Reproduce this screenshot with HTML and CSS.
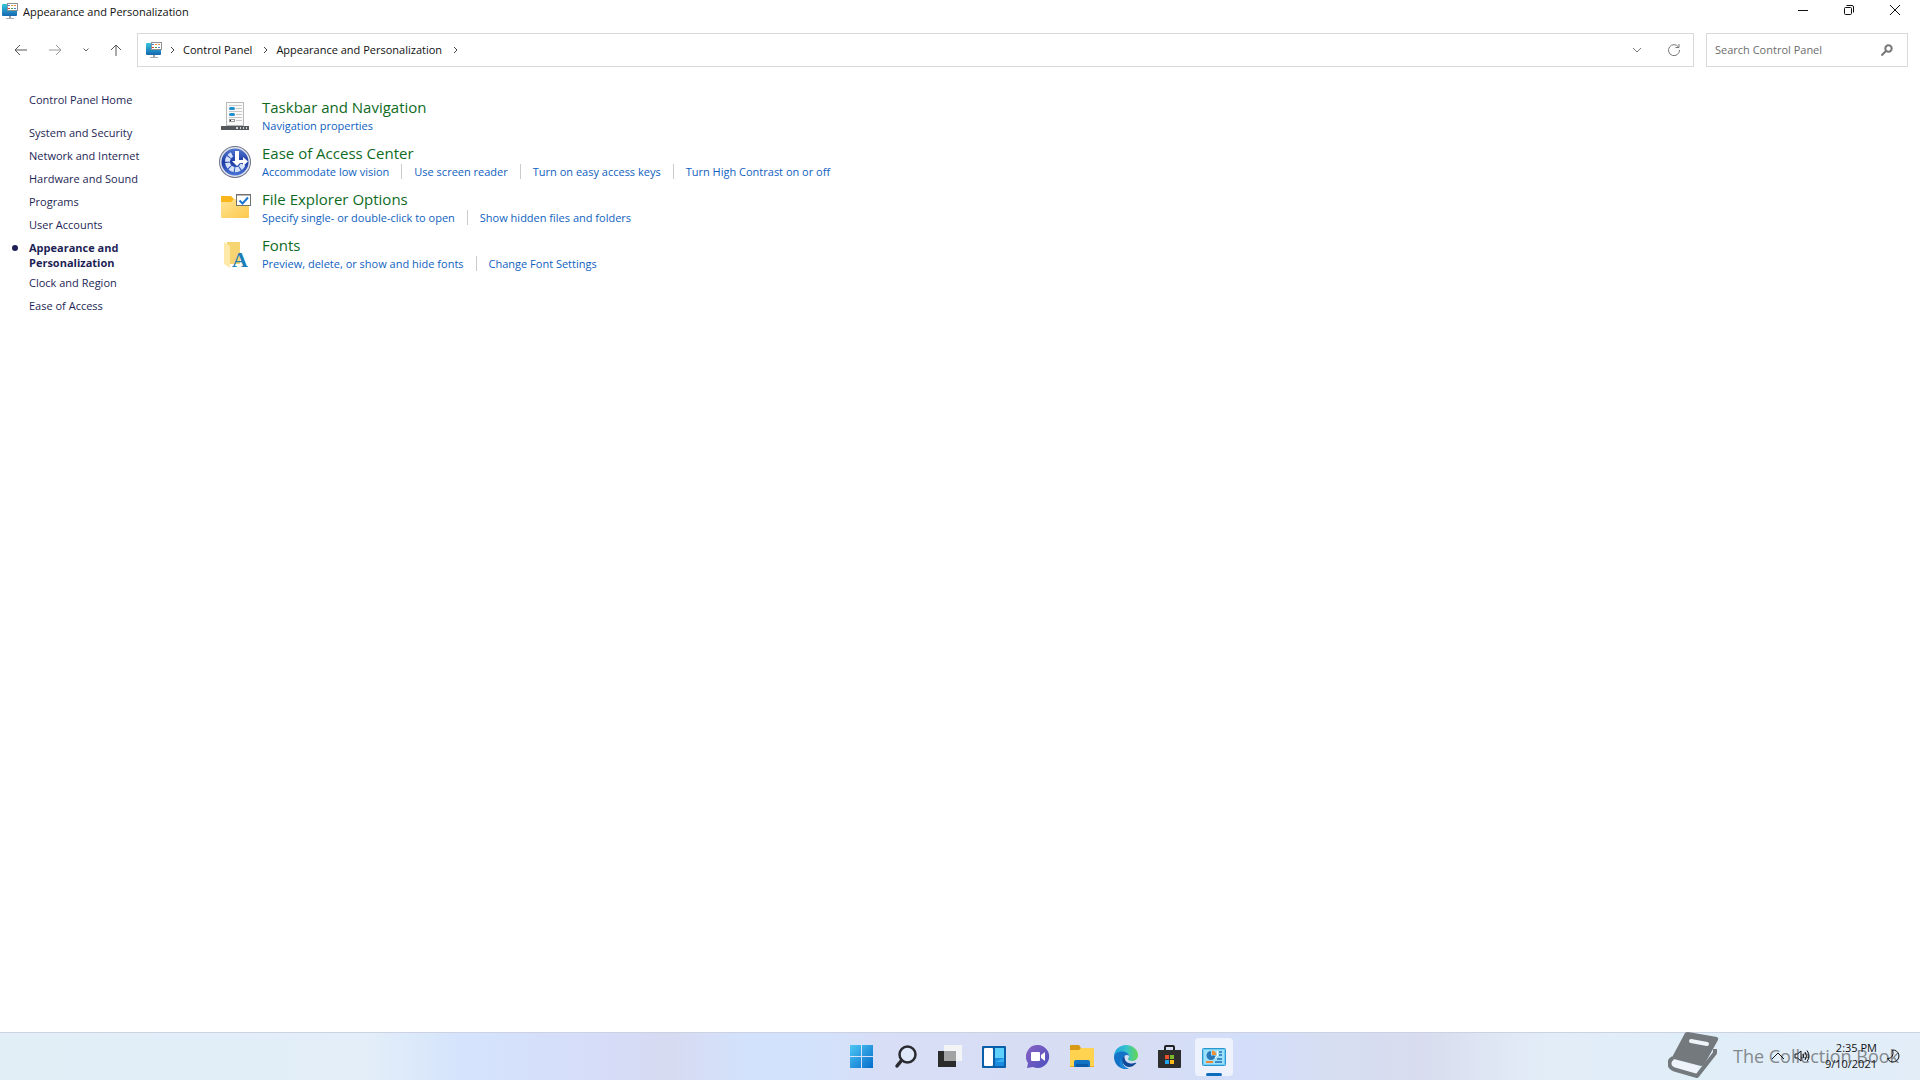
FILE: index.html
```html
<!DOCTYPE html>
<html lang="en">
<head>
    <meta charset="UTF-8">
    <meta name="viewport" content="width=device-width, initial-scale=1.0">
    <title>Appearance and Personalization</title>
    <link rel="stylesheet" href="styles.css">
</head>
<body>
    <!-- Shared Control Panel icon: title bar and address bar -->
    <svg class="defs" width="0" height="0" aria-hidden="true">
        <defs>
            <linearGradient id="screen" x1="0" y1="0" x2="0" y2="1">
                <stop offset="0" stop-color="#36c6dd"/>
                <stop offset="1" stop-color="#1667b0"/>
            </linearGradient>
            <symbol id="cp-icon" viewBox="0 0 16 16">
                <rect x="0" y="1" width="15" height="12" rx="1" fill="url(#screen)"/>
                <path d="M7 13h2v2H7z" fill="#9aa0a4"/>
                <path d="M4 15h8v1H4z" fill="#a8adb1"/>
                <rect x="5" y="0" width="11" height="8" fill="#8d9296"/>
                <rect x="6" y="1" width="9" height="6" fill="#fff"/>
                <path d="M6 2h2v1H6zM12 5h2v1h-2z" fill="#4a7fd0"/>
                <path d="M9 2h2v1H9zM12 2h2v1h-2z" fill="#ee9440"/>
                <path d="M6 5h2v1H6z" fill="#d8452e"/>
                <path d="M9 5h2v1H9z" fill="#43a047"/>
            </symbol>
        </defs>
    </svg>

    <header class="title-bar">
        <svg class="icon-16" aria-hidden="true"><use href="#cp-icon"/></svg>
        <h1>Appearance and Personalization</h1>
        <div class="window-buttons">
            <button type="button" aria-label="Minimize">
                <svg width="12" height="12" viewBox="0 0 12 12"><path d="M1 6.5h10"/></svg>
            </button>
            <button type="button" aria-label="Restore">
                <svg width="12" height="12" viewBox="0 0 12 12"><rect x="1.5" y="3.5" width="7" height="7" rx="1"/><path d="M3.5 1.5H9A1.5 1.5 0 0 1 10.5 3v5.5"/></svg>
            </button>
            <button type="button" aria-label="Close">
                <svg width="12" height="12" viewBox="0 0 12 12"><path d="M1 1l10 10M11 1L1 11"/></svg>
            </button>
        </div>
    </header>

    <nav class="address-row" aria-label="Address">
        <div class="nav-buttons">
            <button type="button" aria-label="Back">
                <svg width="14" height="12" viewBox="0 0 14 12"><path d="M13 6H1.5M6 1L1 6l5 5"/></svg>
            </button>
            <button type="button" class="forward" aria-label="Forward">
                <svg width="14" height="12" viewBox="0 0 14 12"><path d="M1 6h11.5M8 1l5 5-5 5"/></svg>
            </button>
            <button type="button" class="recent" aria-label="Recent locations">
                <svg width="8" height="6" viewBox="0 0 8 6"><path d="M1.5 1.5L4 4l2.5-2.5"/></svg>
            </button>
            <button type="button" aria-label="Up">
                <svg width="12" height="12" viewBox="0 0 12 12"><path d="M6 12V1.5M1 6l5-5 5 5"/></svg>
            </button>
        </div>
        <div class="address-box">
            <svg class="icon-16" aria-hidden="true"><use href="#cp-icon"/></svg>
            <svg class="chevron" viewBox="0 0 5 8"><path d="M1 1l3 3-3 3"/></svg>
            <a href="#">Control Panel</a>
            <svg class="chevron" viewBox="0 0 5 8"><path d="M1 1l3 3-3 3"/></svg>
            <a href="#">Appearance and Personalization</a>
            <svg class="chevron" viewBox="0 0 5 8"><path d="M1 1l3 3-3 3"/></svg>
            <div class="address-tools">
                <button type="button" aria-label="Previous locations">
                    <svg width="10" height="6" viewBox="0 0 10 6"><path d="M1 1l4 4 4-4"/></svg>
                </button>
                <button type="button" aria-label="Refresh">
                    <svg width="14" height="14" viewBox="0 0 14 14"><path d="M11.5 4A5.5 5.5 0 1 0 12.5 7M12 1v3.5H8.5"/></svg>
                </button>
            </div>
        </div>
        <form class="search-box">
            <input type="search" aria-label="Search Control Panel" placeholder="Search Control Panel">
            <button type="submit" aria-label="Search">
                <svg width="12" height="12" viewBox="0 0 12 12"><circle cx="7.5" cy="4.5" r="3.2"/><path d="M5 7L.5 11.5"/></svg>
            </button>
        </form>
    </nav>

    <div class="content">
        <aside class="sidebar">
            <a href="#">Control Panel Home</a>
            <ul>
                <li><a href="#">System and Security</a></li>
                <li><a href="#">Network and Internet</a></li>
                <li><a href="#">Hardware and Sound</a></li>
                <li><a href="#">Programs</a></li>
                <li><a href="#">User Accounts</a></li>
                <li class="current"><a href="#" aria-current="page">Appearance and Personalization</a></li>
                <li><a href="#">Clock and Region</a></li>
                <li><a href="#">Ease of Access</a></li>
            </ul>
        </aside>

        <main>
            <section class="category">
                <svg class="icon-32" viewBox="0 0 32 32" aria-hidden="true">
                    <rect x="7.5" y="2.5" width="17" height="23" fill="#fafafa" stroke="#b9b9b9"/>
                    <path d="M10 5.500h13M17 8.500h6M10 11.500h13M17 14.500h6M10 17.500h13M17 20.500h6" stroke="#c8c8c8"/>
                    <rect x="10" y="7" width="6" height="3" rx="1.5" fill="#1f8fd0"/>
                    <rect x="10" y="13" width="6" height="3" rx="1.5" fill="#1f8fd0"/>
                    <rect x="10.5" y="19.5" width="5" height="2" fill="#fff" stroke="#999"/>
                    <path d="M11 20h1v1h-1z" fill="#222"/>
                    <path d="M2 26h28v4H2z" fill="#54585d"/>
                    <path d="M17 27h2v2h-2zM21 27h1v2h-1zM24 27h1v2h-1zM27 27h1v2h-1z" fill="#d5d5d5"/>
                </svg>
                <div>
                    <h2><a href="#">Taskbar and Navigation</a></h2>
                    <ul>
                        <li><a href="#">Navigation properties</a></li>
                    </ul>
                </div>
            </section>

            <section class="category">
                <svg class="icon-32" viewBox="0 0 32 32" aria-hidden="true">
                    <defs>
                        <linearGradient id="disc" x1="0" y1="0" x2="0" y2="1">
                            <stop offset="0" stop-color="#5279d2"/>
                            <stop offset=".5" stop-color="#1c3ba3"/>
                            <stop offset="1" stop-color="#4a74d6"/>
                        </linearGradient>
                    </defs>
                    <circle cx="16" cy="16" r="16" fill="#6d7388"/>
                    <circle cx="16" cy="16" r="15" fill="#dfe3ee"/>
                    <circle cx="16" cy="16" r="13.5" fill="url(#disc)"/>
                    <!-- dashed dial on the lower left, arrows up and right -->
                    <path d="M24 18.5A8 8 0 1 1 13 8.5" fill="none" stroke="#d5e2fa" stroke-width="5" stroke-dasharray="4.5 1"/>
                    <path d="M16 5h4v9h4v-3l5 4.5-5 4.500V17h-3l-3 3-5-5h3z" fill="#fff"/>
                </svg>
                <div>
                    <h2><a href="#">Ease of Access Center</a></h2>
                    <ul>
                        <li><a href="#">Accommodate low vision</a></li>
                        <li><a href="#">Use screen reader</a></li>
                        <li><a href="#">Turn on easy access keys</a></li>
                        <li><a href="#">Turn High Contrast on or off</a></li>
                    </ul>
                </div>
            </section>

            <section class="category">
                <svg class="icon-32" viewBox="0 0 32 32" aria-hidden="true">
                    <defs>
                        <linearGradient id="folder" x1="0" y1="0" x2="1" y2="1">
                            <stop offset="0" stop-color="#ffe597"/>
                            <stop offset="1" stop-color="#fcc84a"/>
                        </linearGradient>
                    </defs>
                    <path d="M2 5q0-1 1-1h9l3 3h13v4H2z" fill="#fbb61c"/>
                    <path d="M2 10h10l3-3h15v18q0 1-1 1H3q-1 0-1-1z" fill="url(#folder)"/>
                    <rect x="17.5" y="2.5" width="14" height="11" fill="#fff" stroke="#707070"/>
                    <path d="M18 3.5h13" stroke="#bbb"/>
                    <path d="M20.5 8.5l3 3 5.500-6" fill="none" stroke="#1976d2" stroke-width="2"/>
                </svg>
                <div>
                    <h2><a href="#">File Explorer Options</a></h2>
                    <ul>
                        <li><a href="#">Specify single- or double-click to open</a></li>
                        <li><a href="#">Show hidden files and folders</a></li>
                    </ul>
                </div>
            </section>

            <section class="category">
                <svg class="icon-32" viewBox="0 0 32 32" aria-hidden="true">
                    <path d="M8 4h13v22H8z" fill="#f6d472"/>
                    <path d="M5 4l6 4v22l-6-4z" fill="#ffe9a8"/>
                    <text x="21" y="29" class="font-letter">A</text>
                </svg>
                <div>
                    <h2><a href="#">Fonts</a></h2>
                    <ul>
                        <li><a href="#">Preview, delete, or show and hide fonts</a></li>
                        <li><a href="#">Change Font Settings</a></li>
                    </ul>
                </div>
            </section>
        </main>
    </div>

    <footer class="taskbar">
        <div class="apps">
            <button type="button" aria-label="Start">
                <svg viewBox="0 0 24 24">
                    <defs>
                        <linearGradient id="win" gradientUnits="userSpaceOnUse" x1="0" y1="0" x2="24" y2="24">
                            <stop offset="0" stop-color="#4fc8f5"/>
                            <stop offset="1" stop-color="#0068c9"/>
                        </linearGradient>
                    </defs>
                    <path d="M0 0h11v11H0zM12 0h11v11H12zM0 12h11v11H0zM12 12h11v11H12z" fill="url(#win)"/>
                </svg>
            </button>
            <button type="button" aria-label="Search">
                <svg viewBox="0 0 24 24">
                    <circle cx="13.5" cy="9.5" r="8" fill="#dfe8f8" stroke="#2a2b30" stroke-width="2.5"/>
                    <path d="M7.5 15.5L3 21" stroke="#2a2b30" stroke-width="3.5" stroke-linecap="round"/>
                </svg>
            </button>
            <button type="button" aria-label="Task View">
                <svg viewBox="0 0 24 24">
                    <path d="M0 6h18v16H0z" fill="#2b2b2b"/>
                    <path d="M6 0h18v16H6z" fill="#f3f4f5"/>
                    <path d="M6 6h12v10H6z" fill="#a3a3a3"/>
                </svg>
            </button>
            <button type="button" aria-label="Widgets">
                <svg viewBox="0 0 24 24">
                    <rect x="0" y="1" width="24" height="22" rx="1" fill="#0b5ea8"/>
                    <rect x="2" y="3" width="9" height="18" rx="1" fill="#fff"/>
                    <path d="M13 3h9v10h-9z" fill="#5fd0fb"/>
                    <path d="M13 13h9v8h-9z" fill="#1b8be0"/>
                    <path d="M13 17l9-4v4z" fill="#36aef0"/>
                </svg>
            </button>
            <button type="button" aria-label="Chat">
                <svg viewBox="0 0 24 24">
                    <defs>
                        <linearGradient id="chat" x1="0" y1="0" x2="1" y2="1">
                            <stop offset="0" stop-color="#8a62c4"/>
                            <stop offset="1" stop-color="#4a50bd"/>
                        </linearGradient>
                    </defs>
                    <path d="M12 0a11.5 11.5 0 1 1-5 22L1 23l1-5A11.5 11.5 0 0 1 12 0z" fill="url(#chat)"/>
                    <rect x="5" y="7" width="9" height="9" rx="1" fill="#fff"/>
                    <path d="M15 10l4-3v9l-4-3z" fill="#fff"/>
                </svg>
            </button>
            <button type="button" aria-label="File Explorer">
                <svg viewBox="0 0 24 24">
                    <path d="M0 1q0-1 1-1h8l2 3v4H0z" fill="#d89a14"/>
                    <path d="M0 5h9l2-2h12q1 0 1 1v17H0z" fill="#ffd24f"/>
                    <path d="M0 21h24v1H0z" fill="#f0ae25"/>
                    <path d="M4 22v-5q0-2 2-2h12q2 0 2 2v5z" fill="#1173c4"/>
                    <path d="M6 19h12v3H6z" fill="#0b5ca6"/>
                </svg>
            </button>
            <button type="button" aria-label="Microsoft Edge">
                <svg viewBox="0 0 24 24">
                    <defs>
                        <linearGradient id="edge-top" x1="0" y1="0" x2="1" y2="0">
                            <stop offset="0" stop-color="#1aa1dd"/>
                            <stop offset=".5" stop-color="#34c1cf"/>
                            <stop offset="1" stop-color="#66d84f"/>
                        </linearGradient>
                    </defs>
                    <path d="M0 11.5C0 5 5.500 0 12 0s12 4.500 12 10c0 4-3 6-6 6-2.500 0-4-1-4-2s1-1.500 1-3-2-3.500-5-3.500C5 7.500 1 9.500 0 11.500z" fill="url(#edge-top)"/>
                    <path d="M0 12c0-3 4-5.500 8-5.500 4.500 0 7 2.500 7 4.500-1-1-3-1.500-4.500 0C7 14 9 24 14 24h-2C5 24 0 18.500 0 12z" fill="#1272c8"/>
                    <path d="M10.500 11c-2.500 1.500-3 5-1 8 2.500 3.500 8 4.500 12.500-.5.500-.7 0-1-.5-.7-5 2-11.500 0-11-6.800z" fill="#0f4a98"/>
                    <path d="M7 13c0 5 3.500 10 8 10.500-1 .5-2 .5-3 .5-5 0-8-5-5-11z" fill="#1a86d8"/>
                </svg>
            </button>
            <button type="button" aria-label="Microsoft Store">
                <svg viewBox="0 0 24 24">
                    <path d="M7 6V2q0-1 1-1h7q1 0 1 1v4" fill="none" stroke="#222" stroke-width="2"/>
                    <path d="M0 5h23v17q0 1-1 1H1q-1 0-1-1z" fill="#2d2d2d"/>
                    <path d="M7 10h4v4H7z" fill="#e8502a"/>
                    <path d="M12 10h4v4h-4z" fill="#7cb82e"/>
                    <path d="M7 15h4v4H7z" fill="#20a4ea"/>
                    <path d="M12 15h4v4h-4z" fill="#fbb917"/>
                </svg>
            </button>
            <button type="button" class="active" aria-label="Control Panel">
                <svg viewBox="0 0 24 24">
                    <rect x=".5" y="3.5" width="23" height="17" rx="1" fill="#6fcdf5" stroke="#2b97cc"/>
                    <path d="M2 5h20v14H2z" fill="#9de0fb"/>
                    <path d="M9 6a4.500 4.500 0 1 0 4.500 4.500H9z" fill="#2a78b8"/>
                    <path d="M10 5.500a4.500 4.500 0 0 1 4.500 4.500H10z" fill="#f0913a"/>
                    <path d="M4 17h7" stroke="#ee8a35" stroke-width="2"/>
                    <path d="M13 17h7M15 14h5M17 7h3M17 10h3" stroke="#1a6fb5" stroke-width="1.5"/>
                    <path d="M13 13l3-3M15.500 6v4" stroke="#fff"/>
                </svg>
            </button>
        </div>
        <div class="tray">
            <button type="button" aria-label="Show hidden icons">
                <svg width="14" height="8" viewBox="0 0 14 8"><path d="M1 7l6-6 6 6"/></svg>
            </button>
            <button type="button" aria-label="Volume">
                <svg width="16" height="14" viewBox="0 0 16 14"><path d="M1 5h2.500L7 2v10L3.500 9H1zM9 5q1.500 2 0 4M11 3q3 4 0 8M13 1.500q4 5.500 0 11"/></svg>
            </button>
            <time class="clock" datetime="2021-09-10T14:35">2:35 PM<br>9/10/2021</time>
            <button type="button" aria-label="Focus assist">
                <svg width="14" height="14" viewBox="0 0 14 14"><path d="M6.500 1A6 6 0 1 1 1.500 9.500C6 9.500 8 6 6.500 1z"/></svg>
            </button>
        </div>
        <div class="watermark">
            <svg width="52" height="48" viewBox="0 0 52 48" aria-hidden="true">
                <path d="M17 1q1-1 3-1l29 5q2 1 1 3L36 33q-1 1-3 1L6 27q-4-1-5 4z" fill="#74797d"/>
                <path d="M1 33q0-6 6-5l23 6v11L6 38q-5-1-5-5z" fill="#eef4fa"/>
                <path d="M5 26q-4 2-3.500 6t5 5.500L29 44l18-23v-4" fill="none" stroke="#74797d" stroke-width="4" stroke-linejoin="round"/>
                <path d="M23 9l16 3" stroke="#eef4fa" stroke-width="4" stroke-linecap="round"/>
            </svg>
            <span>The Collection Book</span>
        </div>
    </footer>
</body>
</html>
```
FILE: styles.css
```css
* {
    box-sizing: border-box;
}
body {
    margin: 0;
    min-height: 100vh;
    display: flex;
    flex-direction: column;
    background: #fff;
    color: #111;
    font: 11px/15px "Open Sans", "Noto Sans", sans-serif;
}
a {
    color: inherit;
    text-decoration: none;
}
a:hover {
    text-decoration: underline;
}
ul {
    list-style: none;
    margin: 0;
    padding: 0;
}
button {
    display: flex;
    align-items: center;
    justify-content: center;
    padding: 0;
    border: none;
    background: none;
}
svg {
    display: block;
    flex: none;
    fill: none;
}
.defs {
    position: absolute;
}
.icon-16 {
    width: 16px;
    height: 16px;
}
.icon-32 {
    width: 32px;
    height: 32px;
    margin-top: 3px;
}

/* Title bar */
.title-bar {
    display: flex;
    align-items: flex-start;
    height: 33px;
    padding: 0 2px;
}
.title-bar .icon-16 {
    margin-top: 3px;
}
h1 {
    margin: 4px 0 0 5px;
    font-size: 11px;
    font-weight: 400;
}
.window-buttons {
    display: flex;
    margin-left: auto;
}
.window-buttons button {
    width: 46px;
    height: 20px;
}
.window-buttons svg {
    stroke: #111;
}

/* Address bar */
.address-row {
    display: flex;
    height: 34px;
    padding-right: 12px;
}
.nav-buttons {
    display: flex;
    align-items: center;
    gap: 20px;
    width: 137px;
    padding-left: 14px;
}
.nav-buttons svg {
    stroke: #555;
}
.nav-buttons .forward svg {
    stroke: #999;
}
.nav-buttons .recent svg {
    stroke: #666;
}
.address-box {
    flex: 1;
    display: flex;
    align-items: center;
    gap: 8px;
    padding: 0 12px 1px 8px;
    border: 1px solid #d9d9d9;
}
.address-box a {
    margin-right: 3px;
}
.chevron {
    width: 5px;
    height: 8px;
    stroke: #444;
}
.address-tools {
    display: flex;
    gap: 25px;
    margin-left: auto;
}
.address-tools svg {
    stroke: #777;
}
.search-box {
    display: flex;
    align-items: center;
    width: 202px;
    margin-left: 12px;
    padding: 0 14px 1px 8px;
    border: 1px solid #d9d9d9;
}
.search-box input {
    flex: 1;
    min-width: 0;
    padding: 0;
    border: none;
    outline: none;
    background: none;
    font: inherit;
}
.search-box input::placeholder {
    color: #6d6d6d;
}
.search-box svg {
    stroke: #777;
    stroke-width: 2;
}

/* Content */
.content {
    flex: 1;
    display: flex;
}
.sidebar {
    width: 219px;
    padding: 25px 60px 0 29px;
    color: #1e1f55;
}
.sidebar ul {
    margin-top: 18px;
}
.sidebar li {
    margin-bottom: 8px;
}
.sidebar .current {
    position: relative;
    margin-bottom: 5px;
    font-weight: 700;
}
.current::before {
    content: "";
    position: absolute;
    left: -17px;
    top: 5px;
    width: 6px;
    height: 6px;
    border-radius: 50%;
    background: #1e1f55;
}
main {
    flex: 1;
    display: flex;
    flex-direction: column;
    gap: 10px;
    padding-top: 30px;
}
.category {
    display: flex;
    gap: 11px;
    height: 36px;
}
h2 {
    margin: 0;
    font-size: 15px;
    line-height: 20px;
    font-weight: 400;
    color: #0f6b1f;
}
.category ul {
    display: flex;
    padding-top: 1px;
    color: #0f5fc0;
}
.category li + li {
    margin-left: 12px;
    padding-left: 12px;
    border-left: 1px solid #ccc;
}
.font-letter {
    fill: #1b7fb5;
    font: bold 22px "Liberation Serif", serif;
    text-anchor: middle;
}

/* Taskbar */
.taskbar {
    position: relative;
    display: grid;
    grid-template-columns: 1fr auto 1fr;
    height: 48px;
    padding-left: 155px;
    border-top: 1px solid #ccd2e2;
    background: linear-gradient(90deg, #e1eef6 0%, #e3eef8 19%, #d5e4fc 24%, #d5dffa 28%, #d6dcf7 32%, #d6dbf1 35%, #d3e2fc 39%, #d3e2fc 42%, #d7def6 46%, #d7ddf2 58%, #d3defa 65%, #d6def2 69%, #d8dcee 74%, #e2ecf7 80%, #e0eef8 88%, #e2edf8 100%);
}
.apps {
    grid-column: 2;
    display: flex;
    align-items: center;
    gap: 6px;
}
.apps button {
    position: relative;
    width: 38px;
    height: 38px;
    border-radius: 4px;
}
.apps svg {
    width: 24px;
    height: 24px;
}
.apps .active {
    background: #edf2fc;
}
.active::after {
    content: "";
    position: absolute;
    bottom: 0;
    left: 11px;
    width: 16px;
    height: 3px;
    border-radius: 2px;
    background: #0f6cbd;
}
.tray {
    position: relative;
    z-index: 1;
    display: flex;
    align-items: center;
    justify-content: flex-end;
    gap: 9px;
    padding: 0 20px 2px 0;
}
.tray svg {
    stroke: #111;
}
.clock {
    width: 58px;
    line-height: 16px;
    text-align: right;
}
/* Sits behind the tray and the clock */
.watermark {
    position: absolute;
    right: 21px;
    bottom: 0;
    display: flex;
    align-items: center;
    gap: 13px;
    color: #84898e;
    font-size: 18px;
    line-height: 46px;
    pointer-events: none;
}
```
